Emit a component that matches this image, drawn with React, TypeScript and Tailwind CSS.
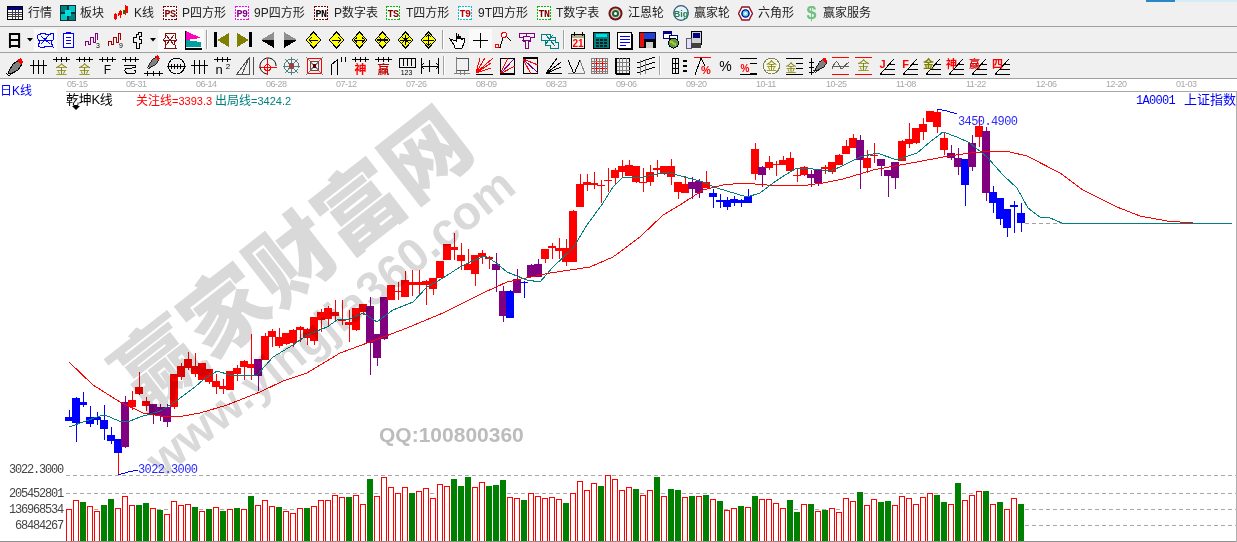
import React from "react";

type C = [string, number, number, number, number];
const candles: C[] = [
["b",410,421,417,421],["b",397,442,398,423],["b",392,407,402,405],["b",406,427,417,424],["b",412,425,417,420],["b",405,440,420,429],["b",427,444,435,441],["b",439,453,439,453],["p",396,448,402,447],["r",391,410,400,407],
["r",372,395,387,394],["r",397,411,401,406],["p",404,424,404,415],["p",404,421,407,416],["p",404,427,407,422],["r",374,409,374,407],["r",363,380,366,377],["r",352,370,359,368],["r",353,377,366,374],["r",363,380,363,380],
["r",369,384,369,382],["r",374,394,381,387],["r",379,394,386,389],["r",371,390,371,390],["r",365,381,368,374],["r",360,380,361,367],["r",334,380,364,368],["p",359,391,359,376],["r",333,360,336,360],["r",329,347,331,337],
["r",328,348,337,346],["r",333,345,333,344],["r",329,347,330,343],["r",326,342,327,330],["r",328,345,329,338],["r",317,345,317,341],["r",309,332,312,320],["r",306,326,308,319],["r",300,320,312,316],["r",300,325,319,321],
["r",310,342,322,325],["r",308,331,308,330],["r",304,315,304,312],["p",297,375,306,343],["p",334,366,334,358],["p",297,340,297,339],["r",285,300,285,300],["r",282,300,291,292],["r",271,297,280,297],["r",270,296,282,285],
["r",270,295,282,285],["r",280,305,281,285],["r",278,295,278,289],["r",261,278,261,278],["r",244,260,244,260],["r",233,260,247,250],["r",243,270,255,261],["r",249,270,264,270],["r",255,286,255,274],["r",250,264,253,257],
["r",256,269,257,259],["p",253,292,264,270],["p",286,322,291,316],["b",290,318,291,318],["p",269,293,279,293],["b",281,298,282,283],["p",264,277,265,277],["p",259,277,264,277],["r",249,263,249,259],["r",243,259,246,248],
["r",238,259,248,251],["r",239,266,248,262],["r",210,262,211,262],["r",174,207,184,207],["r",174,191,182,185],["r",172,189,183,185],["r",180,203,185,186],["r",168,192,180,181],["r",168,184,170,178],["r",160,178,166,172],
["r",160,176,165,176],["r",166,183,166,182],["r",168,192,182,183],["r",165,186,172,182],["r",160,177,168,170],["r",166,175,166,174],["r",159,185,166,177],["r",182,199,182,192],["r",176,193,184,193],["p",177,199,182,189],
["p",179,198,181,193],["r",171,188,182,188],["b",189,208,193,197],["b",194,208,200,202],["b",197,210,200,207],["b",196,206,199,203],["b",199,207,200,203],["b",189,203,196,203],["r",143,180,149,174],["p",166,187,167,175],
["r",156,170,162,168],["r",161,176,164,165],["r",156,165,160,165],["r",152,171,158,171],["r",168,182,175,176],["r",166,176,167,175],["p",170,187,174,178],["p",169,186,170,183],["r",165,174,167,169],["r",162,174,162,172],
["r",154,165,155,165],["r",140,154,146,154],["r",134,148,138,148],["p",135,189,140,160],["r",150,173,158,168],["r",143,163,155,156],["p",159,176,159,166],["p",170,197,170,176],["p",162,189,162,178],["r",140,161,141,161],
["r",123,148,139,144],["r",128,144,128,143],["r",118,140,124,132],["r",111,122,111,122],["r",109,133,112,127],["r",132,155,138,150],["p",145,160,153,158],["p",148,175,158,167],["b",159,206,159,185],["p",135,171,143,167],
["r",116,147,126,137],["p",127,201,131,193],["b",186,213,192,203],["b",198,225,198,219],["b",209,237,209,228],["b",201,233,205,207],["b",203,232,213,223]];

const colors: Record<string, string> = { r: "#ff0000", b: "#0000ff", p: "#800080" };

const v1: [string, number][] = [["r",508],["r",481],["g",486],["r",499],["r",514],["g",495],["g",477],["r",505],["r",469],["r",496],["g",495],["g",489],["r",505],["g",510],["r",523],["r",484],["r",496],["r",493],["g",501],["r",514],["g",507],["r",502],["g",513],["r",508],["g",504],["r",508],["g",468],["r",496],["r",481],["r",499],["g",501],["r",514],["r",520],["r",505],["g",504],["r",499],["r",481],["r",481],["r",466],["r",472],["g",471],["r",466],["r",493],["g",417],["r",469],["r",412],["r",442],["r",460]];
const v2: [string, number][] = [["r",142],["g",159],["r",154],["r",145],["r",175],["r",133],["r",139],["g",117],["g",138],["g",111],["r",142],["r",127],["g",138],["g",135],["g",120],["r",172],["r",175],["g",180],["r",160],["r",169],["r",175],["r",172],["r",178],["g",189],["r",160],["r",124],["r",151],["r",130],["g",138],["r",106],["r",118],["r",151],["r",142],["g",147],["r",166],["r",151],["g",111],["r",169],["g",147],["g",150],["r",172],["g",168],["r",169],["g",165],["r",178],["g",183],["r",211],["r",205],["g",198],["r",202],["g",168],["r",178],["r",178],["r",190],["r",205],["g",180],["g",216],["r",193],["g",192],["r",214],["g",210],["r",205],["r",217],["r",175],["r",184],["g",156],["r",196],["r",178],["g",186],["g",183],["r",196],["r",169],["r",175],["r",193],["r",172],["r",160],["g",165],["g",186],["r",193],["g",129],["r",181],["r",166],["r",154],["g",153],["r",193],["g",186],["r",208],["r",175],["g",192]];
const volumes = [...v1.map(([c, v]) => [c, 340 + v / 3] as [string, number]), ...v2.map(([c, v]) => [c, 440 + v / 3] as [string, number])];

const teal = "69,427 100,416 105,415 119,421 130,421 140,417 160,411 175,402 195,387 203,380 217,371 230,375 257,375 273,357 293,345 307,335 327,327 337,320 350,319 363,313 377,322 393,310 413,302 427,287 443,278 460,267 470,262 485,256 495,262 507,272 527,280 540,282 553,267 573,248 587,225 603,203 613,187 623,177 643,177 667,172 677,175 703,182 717,188 747,197 760,193 773,183 785,175 797,168 813,169 830,171 840,167 850,162 860,157 877,153 897,160 917,153 930,142 943,132 957,137 970,143 987,157 1003,175 1017,188 1028,208 1040,217 1050,218 1062,223 1232,223";
const red = "69,362 93,385 120,402 143,413 167,417 183,416 200,413 227,405 260,392 283,381 307,373 340,353 370,342 407,328 443,313 483,293 507,282 550,273 590,267 613,257 640,237 663,215 680,205 703,190 723,185 743,183 767,185 800,186 823,183 843,179 873,170 917,162 943,157 970,153 993,151 1010,152 1027,156 1060,173 1083,190 1117,207 1140,216 1167,221 1193,223";

const dates1 = ["06-14", "06-28", "07-12", "07-26", "08-09", "08-23", "09-06", "09-20", "10-11", "10-25", "11-08", "11-22", "12-06", "12-20", "01-03"];

const cjk = "font-['Liberation_Sans','Noto_Sans_CJK_SC',sans-serif]";

function Chart() {
  return (
    <svg width={1237} height={450} viewBox="0 92 1237 450" className="block">
      {[475, 493, 509, 525].map((y) => (
        <line key={y} x1={66} x2={1236} y1={y + 0.5} y2={y + 0.5} stroke="#a8a8a8" strokeDasharray="4 3" shapeRendering="crispEdges" />
      ))}
      <line x1={1025} x2={1062} y1={223.5} y2={223.5} stroke="#a0a0a0" strokeDasharray="4 3" shapeRendering="crispEdges" />
      <g shapeRendering="crispEdges">
        {volumes.map(([c, y], i) => {
          const x = 66 + 7 * i;
          return c === "g" ? (
            <rect key={i} x={x} y={Math.round(y)} width={6} height={541 - Math.round(y)} fill="#008000" />
          ) : (
            <rect key={i} x={x + 0.5} y={Math.round(y) + 0.5} width={5} height={541 - Math.round(y)} fill="#fff" stroke="#ff0000" />
          );
        })}
        {candles.map(([c, hi, lo, top, bot], i) => {
          const x = 69 + 7 * i;
          return (
            <g key={i} fill={colors[c]}>
              <rect x={x} y={hi} width={1} height={lo - hi} />
              {i === 7 && <rect x={x} y={453} width={1} height={22} fill="#ff0000" />}
              <rect x={x - 4} y={top} width={8} height={Math.max(bot - top, 1)} />
            </g>
          );
        })}
        <polyline points={red} fill="none" stroke="#ff0000" />
        <polyline points={teal} fill="none" stroke="#008080" />
        <polyline points="118,475 128,472 138,470" fill="none" stroke="#0000ff" />
        <polyline points="937,109 947,111 957,114" fill="none" stroke="#0000ff" />
        <rect x={0} y={541} width={1237} height={1} fill="#909090" />
        <rect x={1236} y={92} width={1} height={450} fill="#b0b0b0" />
      </g>

      <g className="mix-blend-multiply">
        <text transform="translate(288 254) rotate(-38)" textAnchor="middle" dominantBaseline="central" fontSize={85} fontWeight={900} fill="#d9d9d9" className="font-['Noto_Sans_CJK_SC',sans-serif]">赢家财富网</text>
        <text transform="translate(330 322) rotate(-39)" textAnchor="middle" dominantBaseline="central" fontSize={47} fontWeight={700} fill="#d9d9d9" className="font-['Liberation_Sans',sans-serif]">www.yingjia360.com</text>
        <text x={379} y={442} fontSize={21} fontWeight={700} fill="#bcbcbc" className="font-['Liberation_Sans',sans-serif]">QQ:100800360</text>
      </g>

      <g className="font-['Liberation_Mono',monospace]" fontSize={12} letterSpacing={-1.2} fill="#444" textAnchor="end">
        <text x={63} y={473}>3022.3000</text>
        <text x={63} y={497}>205452801</text>
        <text x={63} y={513}>136968534</text>
        <text x={63} y={529}>68484267</text>
      </g>
      <g className="font-['Liberation_Mono',monospace]" fontSize={12} letterSpacing={-0.6} fill="#2a2aff">
        <text x={138} y={473}>3022.3000</text>
        <text x={958} y={125}>3450.4900</text>
      </g>
      <text x={66} y={104} fontSize={13} letterSpacing={-0.3} fill="#000" className={cjk}>乾坤K线</text>
      <polygon points="72,106 80,106 76,110" fill="#000" />
      <text x={136} y={105} fontSize={11} fill="#ff0000" className={cjk}>
        <tspan fontSize={12}>关注线</tspan>=3393.3
      </text>
      <text x={215} y={105} fontSize={11} fill="#008080" className={cjk}>
        <tspan fontSize={12}>出局线</tspan>=3424.2
      </text>
      <text x={1136} y={104} fontSize={12} letterSpacing={-0.7} fill="#0000ff" className="font-['Liberation_Mono',monospace]">1A0001</text>
      <text x={1184} y={104} fontSize={13} fill="#0000ff" className={cjk}>上证指数</text>
    </svg>
  );
}

/* ---------- icon helpers ---------- */
const S = ({ d, c = "#000", w = 1 }: { d: string; c?: string; w?: number }) => (
  <path d={d} fill="none" stroke={c} strokeWidth={w} />
);
const F = ({ d, c = "#000" }: { d: string; c?: string }) => <path d={d} fill={c} />;
const T = ({ x = 11.5, y = 20, s = 10, c = "#000", b = false, t }: { x?: number; y?: number; s?: number; c?: string; b?: boolean; t: string }) => (
  <text x={x} y={y} fontSize={s} fill={c} fontWeight={b ? 700 : 400} textAnchor="middle" shapeRendering="auto" className={cjk}>{t}</text>
);
const Cell = ({ children, pressed = false }: { children?: React.ReactNode; pressed?: boolean }) => (
  <div className={pressed ? "flex h-[22px] w-[23px] items-center justify-center border border-[#fafafa] bg-[#fafafa]" : "flex h-[22px] w-[23px] items-center justify-center"}>
    <svg width={23} height={24} viewBox="0 0 23 24" shapeRendering="crispEdges" className="shrink-0 overflow-visible">{children}</svg>
  </div>
);
const Sep = ({ w }: { w: string }) => (
  <div className={`${w} flex h-full items-center justify-start pl-[2px]`}>
    <div className="h-[19px] w-[2px] border-l border-[#a0a0a0] bg-white" />
  </div>
);
const comb = "M3 5.5H20M6.5 3V8M11.5 3V8M16.5 3V8";
const Rocket = () => (
  <>
    <F d="M4 19L9 10L15 6L18 10L14 16L7 20Z" c="#808080" />
    <S d="M4 19L9 10L15 6L18 10L14 16L7 20Z" />
    <F d="M13 6L17 4L19 8L17 11Z" c="#ff0000" />
    <S d="M2 19L5 22L9 18" />
  </>
);
const Fan = ({ c = "#000" }: { c?: string }) => <S c={c} d="M4 19.5H20M4 19.5L19 13M4 19.5L19 8M4 19.5L15 4" />;
const FanText = ({ t, c }: { t: string; c: string }) => (
  <>
    <S d="M5 20.5H20M5 20.5L19 5M10 15.5H20M14 10.5H20" />
    <T t={t} x={7.5} y={14} s={11} c={c} b />
  </>
);
const Diamond = ({ children }: { children?: React.ReactNode }) => (
  <>
    <path d="M11.5 4L19 12L11.5 20L4 12Z" fill="#ffff00" stroke="#000" />
    {children}
  </>
);

const RectText = ({ t, c, b }: { t: string; c: string; b: string }) => (
  <svg width={14} height={14} viewBox="0 0 14 14" className="shrink-0">
    <rect x={0.5} y={0.5} width={13} height={13} fill="#fff" stroke={b} strokeDasharray="2 1" shapeRendering="crispEdges" />
    <text x={7} y={10.5} fontSize={10} letterSpacing={-0.5} fontWeight={700} textAnchor="middle" fill={c} className="font-['Liberation_Mono',monospace]">{t}</text>
  </svg>
);

const Svg16 = ({ children }: { children: React.ReactNode }) => (
  <svg width={16} height={16} viewBox="0 0 16 16" shapeRendering="crispEdges" className="shrink-0">{children}</svg>
);

const menu: { w: string; icon: React.ReactNode; label: string; pad: string }[] = [
  { w: "w-[53px]", pad: "ml-[5px]", label: "行情", icon: <Svg16><rect x={0.5} y={1.5} width={15} height={13} fill="#fff" stroke="#000" /><rect x={1} y={2} width={14} height={3} fill="#000080" /><S d="M1 7.5H15M1 9.5H15M1 11.5H15M5.5 5V14M8.5 5V14M11.5 5V14" c="#404040" /></Svg16> },
  { w: "w-[53px]", pad: "ml-[4px]", label: "板块", icon: <Svg16><rect x={0} y={0} width={16} height={16} fill="#103030" /><rect x={1} y={1} width={6} height={6} fill="#008080" /><rect x={9} y={1} width={6} height={6} fill="#00c8c8" /><rect x={1} y={9} width={6} height={6} fill="#00c8c8" /><rect x={9} y={9} width={6} height={6} fill="#008080" /><rect x={5} y={5} width={6} height={6} fill="#00e0e0" /></Svg16> },
  { w: "w-[50px]", pad: "ml-[5px]", label: "K线", icon: <Svg16><S d="M2.5 8V15M7.5 5V13M12.5 0V10M5 8V11" c="#ff0000" /><rect x={1} y={9} width={3} height={5} fill="#ff0000" /><rect x={6} y={6} width={3} height={4} fill="#ff0000" /><rect x={10} y={5} width={2} height={4} fill="#008000" /><rect x={12} y={1} width={3} height={7} fill="#ff0000" /></Svg16> },
  { w: "w-[72px]", pad: "ml-[5px]", label: "P四方形", icon: <RectText t="PS" c="#800000" b="#800000" /> },
  { w: "w-[79px]", pad: "ml-[5px]", label: "9P四方形", icon: <RectText t="P9" c="#800080" b="#ff00ff" /> },
  { w: "w-[72px]", pad: "ml-[6px]", label: "P数字表", icon: <RectText t="PN" c="#000000" b="#800000" /> },
  { w: "w-[72px]", pad: "ml-[6px]", label: "T四方形", icon: <RectText t="TS" c="#800000" b="#00c000" /> },
  { w: "w-[79px]", pad: "ml-[6px]", label: "9T四方形", icon: <RectText t="T9" c="#c00000" b="#00c8c8" /> },
  { w: "w-[71px]", pad: "ml-[5px]", label: "T数字表", icon: <RectText t="TN" c="#800000" b="#00c000" /> },
  { w: "w-[65px]", pad: "ml-[5px]", label: "江恩轮", icon: <svg width={15} height={15} viewBox="0 0 15 15" className="shrink-0"><circle cx={7.5} cy={7.5} r={7} fill="#701020" /><circle cx={7.5} cy={7.5} r={5} fill="#d8d8b0" /><circle cx={7.5} cy={7.5} r={3.5} fill="#206040" /><circle cx={7.5} cy={7.5} r={1.5} fill="#fff" /></svg> },
  { w: "w-[65px]", pad: "ml-[5px]", label: "赢家轮", icon: <svg width={16} height={16} viewBox="0 0 16 16" className="shrink-0"><circle cx={8} cy={8} r={7.3} fill="#e8f0f8" stroke="#305878" strokeWidth={1.2} /><text x={8} y={11.5} fontSize={9} fontWeight={700} textAnchor="middle" fill="#208050" className="font-['Liberation_Sans',sans-serif]">Big</text></svg> },
  { w: "w-[67px]", pad: "ml-[5px]", label: "六角形", icon: <svg width={15} height={15} viewBox="0 0 15 15" className="shrink-0"><polygon points="4,1 11,1 14.5,7.5 11,14 4,14 0.5,7.5" fill="#fff" stroke="#901020" strokeWidth={1.4} /><circle cx={7.5} cy={7.5} r={3.6} fill="#60d8d8" stroke="#0000a0" strokeWidth={1.4} /><circle cx={7.5} cy={7.5} r={1.2} fill="#fff" /></svg> },
  { w: "w-[80px]", pad: "ml-[5px]", label: "赢家服务", icon: <svg width={13} height={18} viewBox="0 0 13 18" className="shrink-0"><text x={6.5} y={15} fontSize={18} fontWeight={700} textAnchor="middle" fill="#70c080" className="font-['Liberation_Sans',sans-serif]">$</text></svg> },
];

const Arrow = ({ w }: { w: string }) => (
  <div className={`${w} flex justify-center`}>
    <svg width={6} height={4} viewBox="0 0 6 4"><polygon points="0,0 6,0 3,3.5" fill="#000" /></svg>
  </div>
);

function Row2() {
  return (
    <div className="flex h-[26px] items-center border-b border-[#a0a0a0] pl-[3px]">
      <Cell><T t="日" x={11.5} y={18} s={16} b /></Cell>
      <Arrow w="w-[8px]" />
      <Cell pressed><S c="#0000ff" d="M4 7L9 5L14 7L19 5L20 11L17 14L19 19L13 18L8 20L4 18L6 13L3 10ZM7 8L16 16M15 7L7 16M4 12H19" /></Cell>
      <Cell><path d="M6.5 5.5H16.5V19.5H6.5Z" fill="#fff" stroke="#0000ff" /><S c="#0000ff" d="M9 4.5H14M9 9.5H14M9 12.5H14M9 15.5H14" /></Cell>
      <Cell><S c="#800080" d="M5 18V13H8V16H10V9H13V14H15V5H17V12" /><T t="3" x={18} y={20} s={7} /></Cell>
      <Cell><S c="#a00000" d="M5 18V13H8V16H10V9H13V14H15V5H17V12" /><T t="9" x={18} y={20} s={7} /></Cell>
      <Cell><S d="M10 20V14H7V9H10V6H12V4H15V8H13V11H15V15H13V20Z" /></Cell>
      <Arrow w="w-[8px]" />
      <div className="w-px" />
      <Cell pressed><S c="#801010" d="M7 5H17V10L19 12L16 14L18 20H7L8 14L5 12L8 9ZM8 7L16 17M16 7L8 17M5 12H18" /></Cell>
      <Cell pressed><S d="M4 3V21H21" /><F d="M5 3L20 10L5 12Z" c="#ff00c0" /><F d="M5 12L20 14L20 19H5Z" c="#00a0a0" /><S c="#000" d="M4 20.5H21" /></Cell>
      <Sep w="w-[6px]" />
      <Cell><rect x={4} y={4} width={3} height={15} fill="#000" /><F d="M19 5V19L7 12Z" c="#808000" /></Cell>
      <Cell><rect x={16} y={4} width={3} height={15} fill="#000" /><F d="M4 5V19L16 12Z" c="#808000" /></Cell>
      <Cell><F d="M18 4V12H5Z" c="#909090" /><F d="M18 20V12H5Z" c="#000" /></Cell>
      <Cell><F d="M5 4V12H18Z" c="#909090" /><F d="M5 20V12H18Z" c="#000" /></Cell>
      <Cell><Diamond><S d="M16 12H7M10 9L7 12L10 15" /></Diamond></Cell>
      <Cell><Diamond><S d="M7 12H16M13 9L16 12L13 15" /></Diamond></Cell>
      <Cell><Diamond><S d="M6 12H17M9 9.5L6 12L9 14.5M14 9.5L17 12L14 14.5" /></Diamond></Cell>
      <Cell><Diamond><S d="M6 12H17M8 9L11 12L8 15M15 9L12 12L15 15" w={1.3} /></Diamond></Cell>
      <Cell><Diamond><S d="M6 12H17M11.5 7V17M8 9L15 15M15 9L8 15" /></Diamond></Cell>
      <Cell><Diamond><S d="M6 12H17M11.5 7V17M9 9L11.5 7L14 9M9 15L11.5 17L14 15" /></Diamond></Cell>
      <Sep w="w-[6px]" />
      <Cell><path d="M7 12L4 11L8 17L9 20H16L18 15V10L16 10V12L14 8V11L12 6V11L10 5V13Z" fill="#fff" stroke="#000" /></Cell>
      <Cell pressed><S d="M4 12.5H19M11.5 5V20" /></Cell>
      <Cell><S d="M3 16L8 20L11 9M14 8L19 13" /><circle cx={5} cy={18} r={2} fill="#fff" stroke="#ff0000" /><circle cx={12} cy={7} r={2.5} fill="#fff" stroke="#ff0000" /></Cell>
      <Cell><S c="#800080" d="M4 5H19V9H15V13H13V20H10V13H8V9H4ZM8 8H15M11 5V9M7 12H16" /></Cell>
      <Cell><S c="#008080" d="M6 6H12V9H17V14H20V20H12V17H7V12H3V7ZM8 7L17 18M15 7L7 17M5 12H18" /></Cell>
      <Sep w="w-[6px]" />
      <Cell><rect x={4.5} y={6.5} width={13} height={14} fill="#f8f8f0" stroke="#000" /><rect x={5} y={7} width={12} height={3} fill="#b0b080" /><S d="M7 4V8M15 4V8" /><T t="21" x={11} y={19} s={10} c="#ff0000" b /></Cell>
      <Cell><rect x={3.5} y={4.5} width={16} height={16} fill="#008080" stroke="#000" /><rect x={6} y={6} width={11} height={3} fill="#00e0e0" /><S d="M6 11.5H9M10 11.5H13M14 11.5H17M6 14.5H9M10 14.5H13M14 14.5H17M6 17.5H9M10 17.5H13M14 17.5H17" w={2} c="#002020" /></Cell>
      <Cell><rect x={4.5} y={4.5} width={14} height={16} fill="#fff" stroke="#000" /><S c="#0000ff" d="M7 8.5H17M7 11.5H17M7 14.5H17M7 17.5H13" /><S d="M19.5 6V21H6" w={1.5} /></Cell>
      <Cell><rect x={3} y={4} width={17} height={16} fill="#000" /><rect x={4} y={5} width={4} height={14} fill="#e01010" /><rect x={8} y={5} width={11} height={6} fill="#2040e0" /><rect x={10} y={14} width={7} height={6} fill="#d0d0d0" /></Cell>
      <Cell><rect x={4.5} y={3.5} width={8} height={7} fill="#fff" stroke="#000080" /><rect x={5} y={4} width={7} height={2} fill="#000080" /><rect x={10.5} y={7.5} width={8} height={7} fill="#fff" stroke="#000080" /><circle cx={14.5} cy={15} r={5} fill="#50a050" stroke="#000" /><S c="#c0c020" d="M11 13L17 17" w={2} /></Cell>
      <Cell><rect x={9} y={3} width={10} height={13} fill="#d0d0d0" stroke="#000" /><rect x={11} y={5} width={7} height={5} fill="#000080" /><rect x={4} y={10} width={5} height={10} fill="#e0e0ff" stroke="#606060" /><rect x={9} y={15} width={10} height={5} fill="#404040" /></Cell>
    </div>
  );
}

function Row3() {
  return (
    <div className="flex h-[26px] items-center border-b border-[#a0a0a0] pl-[4px]">
      <Cell><Rocket /></Cell>
      <Cell><S d="M3 11.5H20M6.5 6V20M11.5 6V20M16.5 6V20" /></Cell>
      <Cell><S d={comb} /><T t="金" y={20} s={12} c="#808000" /></Cell>
      <Cell><S d={comb} /><T t="金" y={20} s={12} c="#808000" /></Cell>
      <Cell><S d={comb} /><T t="F" y={20} s={12} /></Cell>
      <Cell><S d={comb} /><S d="M5 11H14C18 11 18 14 13 14H8M8 14C4 16 6 20 11 20C16 20 19 18 15 16" /></Cell>
      <Cell><g transform="translate(3 -2) scale(.78)"><Rocket /></g><S d="M2 19.5H21M5.5 17V22M11.5 17V22M17.5 17V22" /></Cell>
      <Cell><circle cx={11.5} cy={12} r={8} fill="none" stroke="#000" /><S d="M2 12.5H21M6.5 10V15M9.5 10V15M12.5 10V15M15.5 10V15" /></Cell>
      <Cell><S d="M3 11.5H20M6.5 6V20M11.5 6V20M16.5 6V20" /></Cell>
      <Cell><S d={comb} /><T t="n" x={8} y={20} s={13} /><T t="2" x={17} y={15} s={8} /></Cell>
      <Cell><S c="#505050" d="M3 20L15 4V20ZM8 20L15 4M19.5 3V21" /></Cell>
      <Cell><path d="M19 12C19 7 15 4 11 4C7 4 3 8 3 12C3 17 7 20 11 20" fill="none" stroke="#000" shapeRendering="auto" /><S c="#ff0000" d="M2 13.5H20M10.5 5V21" /><circle cx={10.5} cy={13.5} r={3} fill="none" stroke="#ff0000" /></Cell>
      <Cell><S c="#508080" d="M3 12H20M11.5 3V21M5 5L18 19M18 5L5 19" /><circle cx={11.5} cy={12} r={7} fill="none" stroke="#508080" /><circle cx={11.5} cy={12} r={3} fill="#a04040" /></Cell>
      <Cell><rect x={4.5} y={4.5} width={14} height={15} fill="none" stroke="#ff0000" /><S c="#808080" d="M3 3L20 21M20 3L3 21" /><rect x={7.5} y={7.5} width={8} height={9} fill="none" stroke="#804040" /><rect x={10} y={10} width={3} height={4} fill="#600000" /></Cell>
      <Cell><S d="M5 21V11L11 6V21M15 3V8M19 3V8" /></Cell>
      <Cell><S d={comb} /><T t="神" y={20} s={12} c="#ff0000" b /></Cell>
      <Cell><S d={comb} /><T t="赢" y={20} s={12} c="#c00000" b /></Cell>
      <Cell><S d="M4 4H20M4 4V14M8 4V12M12 4V12M16 4V12M20 4V14M4 13.5H20" /><T t="123" y={21} s={7} /></Cell>
      <Cell><S d="M3.5 4V20M20.5 4V20M3 12H21M6 9L3 12L6 15M18 9L21 12L18 15M11.5 6V18" /></Cell>
      <Sep w="w-[9px]" />
      <Cell><rect x={6.5} y={4.5} width={12} height={12} fill="none" stroke="#505050" /><S c="#808080" d="M6.5 3V20M4 19.5H20M10 17V21M14 17V21" /></Cell>
      <Cell><S c="#ff0000" d="M3 19L20 4M3 19L18 9M3 19L18 14M3 19L12 4M3 19L7 4" /><S d="M3 20.5H20" /></Cell>
      <Cell><rect x={4.5} y={4.5} width={14} height={15} fill="none" stroke="#000" /><S c="#800080" d="M4 20L18 5" /><S c="#ff0000" d="M4 20L19 12M4 20L12 4" /><S d="M4 20L19 20" w={2} /></Cell>
      <Cell><rect x={4.5} y={4.5} width={14} height={15} fill="none" stroke="#000" /><S c="#800080" d="M4 5L19 19" /><S c="#ff0000" d="M4 5L19 11M4 5L12 20" /><S d="M4 4L19 4" w={2} /></Cell>
      <Cell><Fan /></Cell>
      <Cell><S d="M3 6L9 20L15 6" /><S d="M15 6L20 20M3 19.5H20" c="#808080" /></Cell>
      <Cell><rect x={3.5} y={4.5} width={16} height={15} fill="none" stroke="#808080" /><S c="#ff0000" d="M3.5 9.5H19M3.5 14.5H19M8.5 4V19M14.5 4V19" /><S c="#808080" d="M3.5 7H19M3.5 12H19M3.5 17H19M6 4V19M11.5 4V19M17 4V19" /></Cell>
      <Cell><rect x={4.5} y={4.5} width={14} height={15} fill="none" stroke="#000" /><S c="#808080" d="M4.5 8H19M4.5 12H19M4.5 16H19M8 4V19M11.5 4V19M15 4V19" /><S d="M4.5 4V20M5 19.5H19" w={2} /></Cell>
      <Cell><S d="M3 9L21 3M3 14L21 8M3 19L21 13" /><S c="#808080" d="M6 6V21M11 5V20" /></Cell>
      <Sep w="w-[11px]" />
      <Cell><S d="M4 4.5H11M4 9.5H11M4 14.5H11M4 19.5H11M4.5 4V20M7.5 4V20M10.5 4V20" /><S d="M15 6.5H19M15 11.5H19M15 16.5H19" w={2} /></Cell>
      <Cell><S c="#ff0000" d="M3 3.5H20" /><S d="M4 21L10 4L14 12" /><T t="%" x={15} y={20} s={11} c="#ff0000" b /></Cell>
      <Cell><T t="%" y={17} s={14} /></Cell>
      <Cell><S d="M3 4.5H20M13 9.5H20M13 19.5H20M3 20.5H20" /><T t="%" x={8} y={18} s={10} c="#ff0000" b /></Cell>
      <Cell><circle cx={11.5} cy={12} r={8} fill="#f8f8e8" stroke="#808060" /><T t="金" y={16} s={11} c="#808000" /></Cell>
      <Cell><S d="M3 4.5H20M13 9.5H20M13 14.5H20M3 20.5H20" /><T t="金" x={8} y={18} s={11} c="#808000" /></Cell>
      <Cell><g transform="translate(5 0) scale(.85)"><Rocket /></g><S d="M5.5 4V21M3 8H8M3 13H8M3 18H8" /></Cell>
      <Cell><S c="#ff0000" d="M3 3.5H20M3 20.5H20" /><S c="#606060" d="M3 15C7 4 9 8 11 13C13 19 16 8 20 9M3 12H20" /></Cell>
      <Cell><S c="#ff0000" d="M3 3.5H20M3 20.5H20" /><T t="金" y={16} s={12} c="#808000" /></Cell>
      <Cell><FanText t="J" c="#ff0000" /></Cell>
      <Cell><FanText t="F" c="#ff0000" /></Cell>
      <Cell><FanText t="金" c="#808000" /></Cell>
      <Cell><FanText t="神" c="#ff0000" /></Cell>
      <Cell><FanText t="赢" c="#e00000" /></Cell>
      <Cell><FanText t="四" c="#ff0000" /></Cell>
    </div>
  );
}

export default function App() {
  return (
    <div className={`relative h-[542px] w-[1237px] overflow-hidden bg-white ${cjk}`}>
      <div className="absolute right-0 top-0 flex h-[2px] w-[91px]">
        <div className="w-[29px] bg-[#2b86c8]" />
        <div className="flex-1 bg-[#d8ecf8]" />
      </div>
      <div className="bg-[#f0f0f0]">
        <div className="flex h-[27px] items-center border-b border-[#a0a0a0] pl-[7px] text-[12px] text-[#222]">
          {menu.map((m) => (
            <div key={m.label} className={`${m.w} flex items-center`}>
              {m.icon}
              <span className={`${m.pad} whitespace-nowrap`}>{m.label}</span>
            </div>
          ))}
        </div>
        <Row2 />
        <Row3 />
      </div>
      <div className="flex h-[13px] items-start text-[#0000ff]">
        <div className="h-full w-[66px] shrink-0 whitespace-nowrap text-[12px] leading-[24px]">日K线</div>
        <div className="flex h-[13px] flex-1 items-center overflow-hidden border-b border-[#a8a8a8] text-[9px] tracking-[-0.5px] text-[#a8a8a8]">
          <span className="w-[60px] shrink-0 pl-px">05-15</span>
          <span className="w-[70px] shrink-0">05-31</span>
          {dates1.map((d) => (
            <span key={d} className="w-[70px] shrink-0">{d}</span>
          ))}
        </div>
      </div>
      <Chart />
    </div>
  );
}
